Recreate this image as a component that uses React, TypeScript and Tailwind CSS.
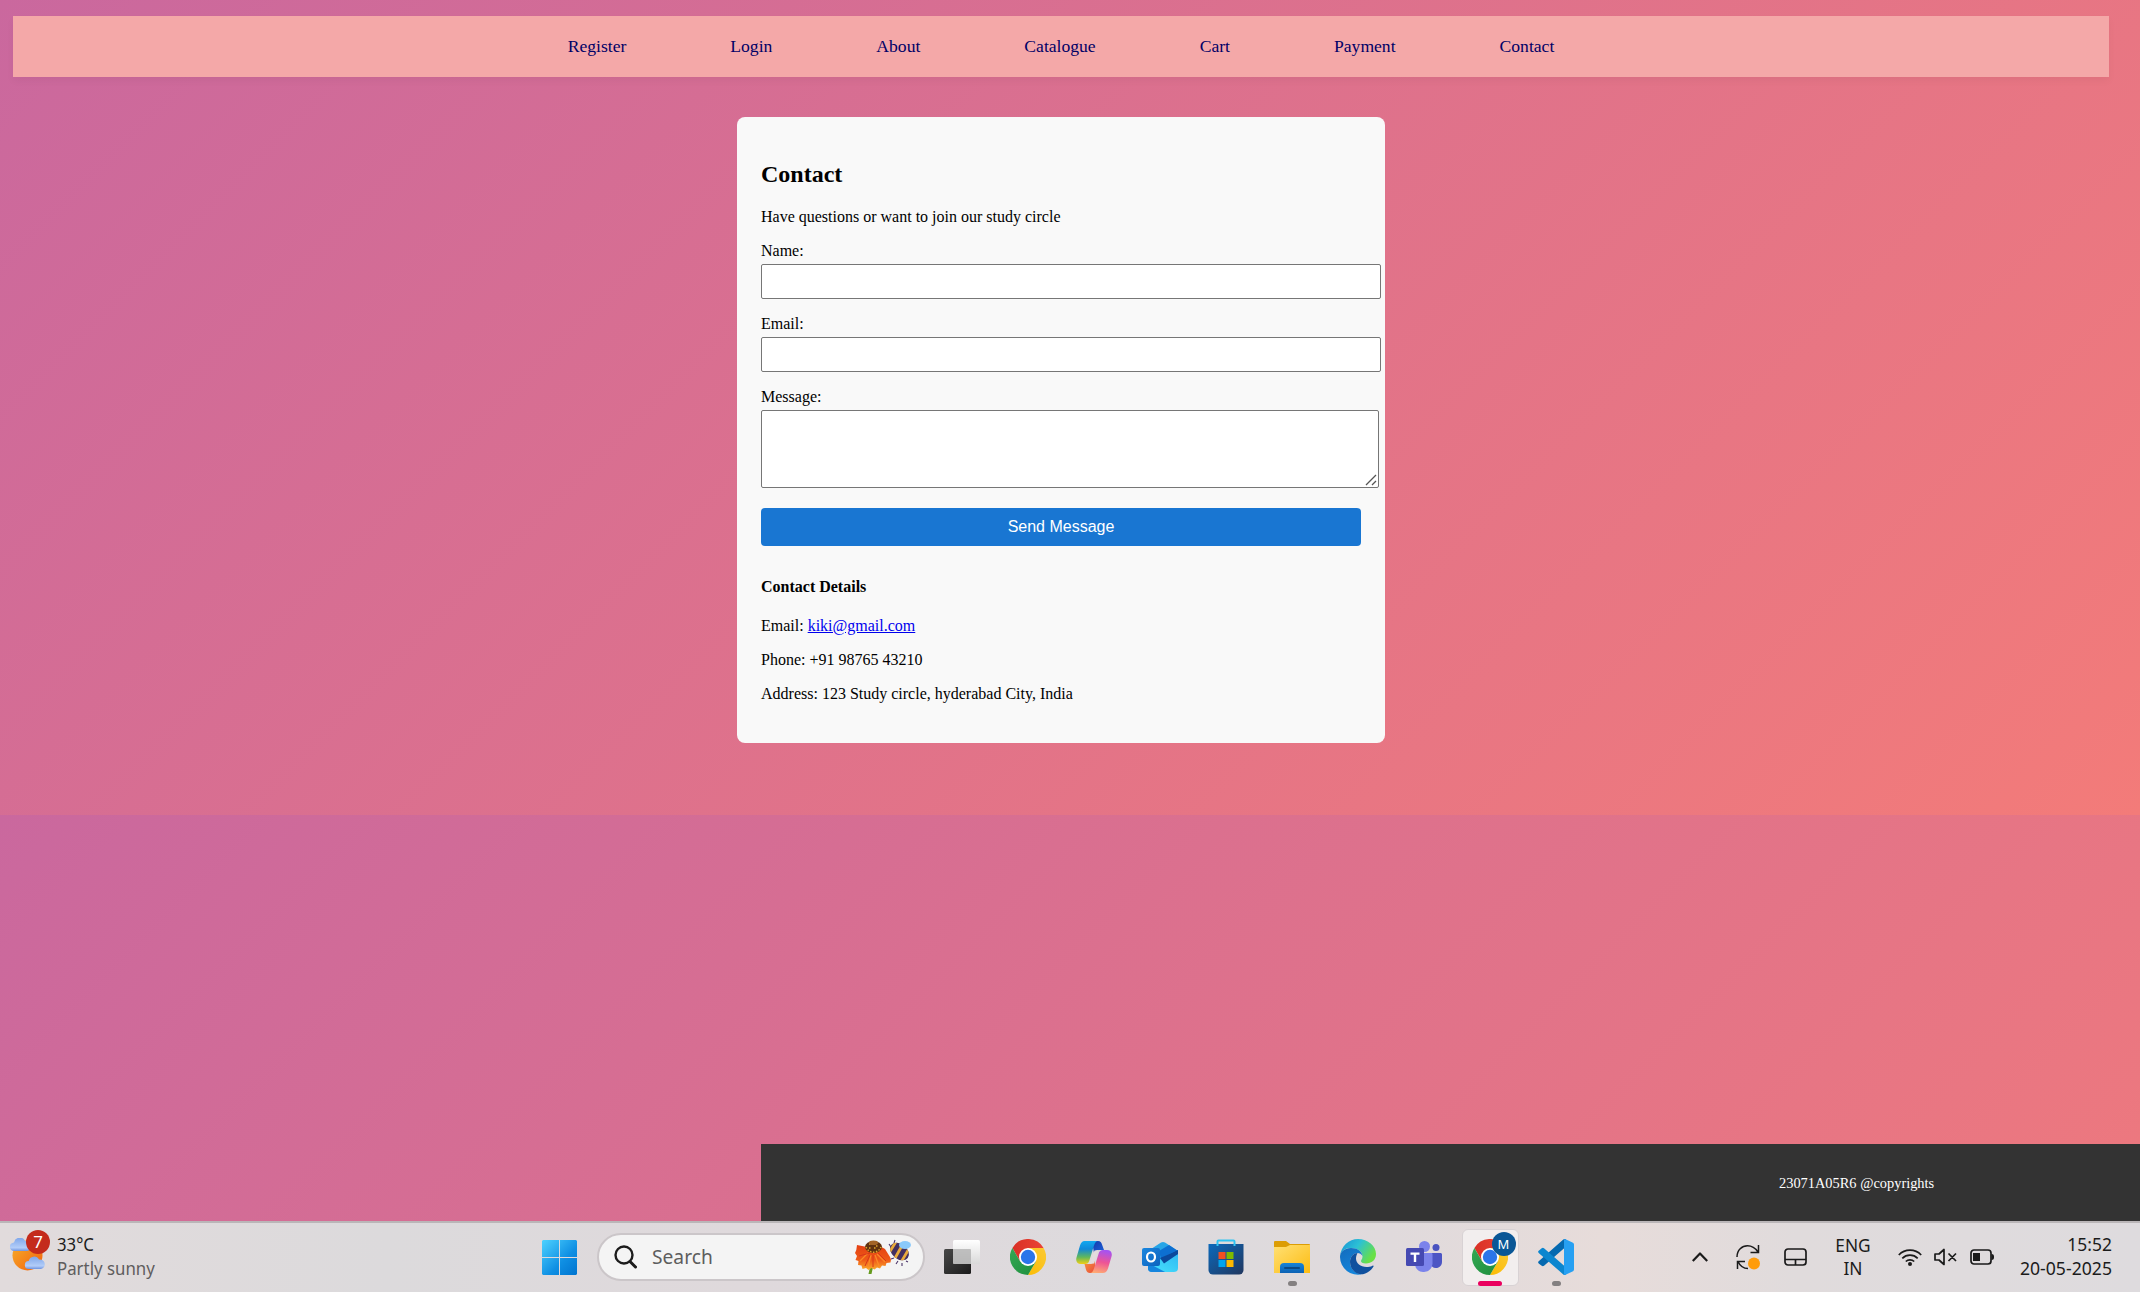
import React from "react";

const nav = ["Register", "Login", "About", "Catalogue", "Cart", "Payment", "Contact"];

function Chrome({ id }: { id: string }) {
  return (
    <svg width="36" height="36" viewBox="0 0 48 48">
      <defs>
        <linearGradient id={id + "r"} x1="0" y1="0" x2="1" y2="0">
          <stop offset="0" stopColor="#d93025" />
          <stop offset="1" stopColor="#ea4335" />
        </linearGradient>
        <linearGradient id={id + "g"} x1="0" y1="0" x2="1" y2="1">
          <stop offset="0" stopColor="#34a853" />
          <stop offset="1" stopColor="#1e8e3e" />
        </linearGradient>
        <linearGradient id={id + "y"} x1="1" y1="0" x2="0" y2="1">
          <stop offset="0" stopColor="#fbc934" />
          <stop offset="1" stopColor="#fbbc04" />
        </linearGradient>
      </defs>
      <path d="M24 12h20.8A24 24 0 0 0 3.2 12l10.4 18z" fill={`url(#${id}r)`} />
      <path d="M34.4 30 24 48A24 24 0 0 0 44.8 12H24z" fill={`url(#${id}y)`} />
      <path d="M13.6 30 3.2 12A24 24 0 0 0 24 48l10.4-18z" fill={`url(#${id}g)`} />
      <circle cx="24" cy="24" r="12" fill="#fff" />
      <circle cx="24" cy="24" r="9.6" fill="#2b75ea" />
    </svg>
  );
}

function Weather() {
  const cloud = "M4 13a4 4 0 0 1-.3-8A5.5 5.5 0 0 1 14 3.6 4.700 4.700 0 0 1 16 13z";
  return (
    <svg width="38" height="38" viewBox="0 0 38 38">
      <defs>
        <linearGradient id="sun" x1="0" y1="0" x2="1" y2="1">
          <stop offset="0" stopColor="#f7b02c" />
          <stop offset="1" stopColor="#f2600c" />
        </linearGradient>
        <linearGradient id="cld" x1="0" y1="0" x2="0" y2="1">
          <stop offset="0" stopColor="#7ea6ea" />
          <stop offset=".75" stopColor="#b3cdf8" />
          <stop offset="1" stopColor="#6d93e0" />
        </linearGradient>
      </defs>
      <circle cx="17.500" cy="17.500" r="15" fill="url(#sun)" />
      <path d={cloud} fill="url(#cld)" transform="translate(0 -1) scale(1.080)" />
      <path d={cloud} fill="url(#cld)" transform="translate(15 18)" />
    </svg>
  );
}

function Blossom() {
  return (
    <svg width="58" height="36" viewBox="0 0 58 36">
      <defs>
        <linearGradient id="petal" x1="0" y1="0" x2="0" y2="1">
          <stop offset="0" stopColor="#e43f12" />
          <stop offset=".6" stopColor="#ee5a18" />
          <stop offset="1" stopColor="#fbab2c" />
        </linearGradient>
        <clipPath id="beeBody">
          <ellipse cx="44.500" cy="12.500" rx="10.500" ry="7.500" transform="rotate(38 44.500 12.500)" />
        </clipPath>
      </defs>
      <path d="M15 28h3l-1.500 7h-3z" fill="#659b1e" />
      <path
        d="M12 8 2 6l-.7 5L0 14l2 3-1.500 4 3 1-.5 4 3.500.5 1 3.500 3.500-1 2.500 2 3-2 3 1.500 2.500-2 3 1 2-3 3.500.5 1-3 4-.5.500-3L35 18l-5-8-7-4z"
        fill="url(#petal)"
      />
      <path d="M13 14 5 22M16 16l-3 12M20 16l4 11M22 15l8 8" stroke="#fb8a26" strokeWidth="1.300" />
      <path d="M15 14 4 17M15 16l-5 11M18 16v12M23 14l8 8" stroke="#d8371a" />
      <ellipse cx="18.500" cy="8" rx="8.500" ry="6" fill="#60310f" />
      <path d="M11 8c3 7 12 7 15 0M14 5h2m2-2h2m1 4h2M14 9h2m3 0h2" stroke="#e2a62a" strokeWidth="1.500" strokeDasharray="1.500 1.500" fill="none" />
      <ellipse cx="18.500" cy="3.800" rx="4.500" ry="2.300" fill="#a36326" />
      <path d="m39 4 1-3m-4 7-2-3m5 14-3 1m7 2-2 3m6-1v3m4-5 2 1" stroke="#4a3369" strokeWidth="1.100" fill="none" />
      <g clipPath="url(#beeBody)">
        <path fill="#443060" d="M32 0h26v28H32z" />
        <path d="M42 1 34 14M49 3 39 21M55 8 45 25" stroke="#e9aa3b" strokeWidth="2.800" />
      </g>
      <ellipse cx="50" cy="6" rx="6" ry="4" fill="#8ac9fa" />
    </svg>
  );
}

function TaskView() {
  return (
    <svg width="36" height="36" viewBox="0 0 36 36">
      <defs>
        <linearGradient id="tv" x1="0" y1="0" x2="1" y2="1">
          <stop offset="0" stopColor="#484848" />
          <stop offset="1" stopColor="#1b1b1b" />
        </linearGradient>
        <linearGradient id="tw" x1="0" y1="0" x2="0" y2="1">
          <stop offset="0" stopColor="#fff" />
          <stop offset="1" stopColor="#d9d9d9" />
        </linearGradient>
      </defs>
      <rect x="0" y="10" width="27" height="25" rx="1.500" fill="url(#tv)" />
      <rect x="9" y="1" width="27" height="24" rx="1.500" fill="url(#tw)" />
      <path d="M9 10h17a1 1 0 0 1 1 1v14H10a1 1 0 0 1-1-1z" fill="#aaa" opacity=".7" />
    </svg>
  );
}

function Copilot() {
  return (
    <svg width="36" height="34" viewBox="0 0 36 34">
      <defs>
        <linearGradient id="cpa" x1="0" y1="0" x2="0" y2="1">
          <stop offset="0" stopColor="#13a8f0" />
          <stop offset=".35" stopColor="#1288d8" />
          <stop offset=".7" stopColor="#5fb85c" />
          <stop offset="1" stopColor="#f2cf12" />
        </linearGradient>
        <linearGradient id="cpb" x1="0.500" y1="0" x2=".3" y2="1">
          <stop offset="0" stopColor="#a653f0" />
          <stop offset=".5" stopColor="#ee5495" />
          <stop offset="1" stopColor="#ffab73" />
        </linearGradient>
        <linearGradient id="cpc" x1="0" y1="0" x2="1" y2="1">
          <stop offset="0" stopColor="#1437a8" />
          <stop offset="1" stopColor="#1e63dc" />
        </linearGradient>
        <linearGradient id="cpd" x1="0" y1="0" x2="1" y2="1">
          <stop offset="0" stopColor="#f8973c" />
          <stop offset="1" stopColor="#e8483b" />
        </linearGradient>
      </defs>
      <path d="M16 1h6c2.500 0 3.300 1.300 4 3.500L28 10h-5c-2.500 0-4 1-5 3z" fill="url(#cpc)" />
      <path d="M20 33h-6c-2.500 0-3.500-1.500-4.200-4L8.500 24H13c3 0 4.500-1.500 5.500-4z" fill="url(#cpd)" />
      <path d="M8.500 1H22c-2 0-3 1.500-4 4.500L13.500 20c-.9 3-2 4-4.500 4H5c-4 0-5.500-3-4.500-6.500L4 5.500C5 2.500 6.300 1 8.500 1z" fill="url(#cpa)" />
      <path d="M27 33H14c2 0 3-1.500 4-4.500L22.500 14c.9-3 2-4 4.500-4h4c4 0 5.500 3 4.500 6.500L32 28.500C31 31.500 29.500 33 27 33z" fill="url(#cpb)" />
      <path d="m18.500 10.500 4-.5-4.500 13.500-4.500.5z" fill="#e4dcdd" />
    </svg>
  );
}

function Outlook() {
  return (
    <svg width="36" height="32" viewBox="0 0 36 32">
      <defs>
        <linearGradient id="ol" x1="0" y1="0" x2="1" y2="1">
          <stop offset="0" stopColor="#1a87e0" />
          <stop offset="1" stopColor="#0d62bd" />
        </linearGradient>
        <linearGradient id="oe" x1="1" y1="0" x2="0" y2="1">
          <stop offset="0" stopColor="#2fb9f3" />
          <stop offset=".7" stopColor="#41d7fa" />
          <stop offset="1" stopColor="#1681dd" />
        </linearGradient>
      </defs>
      <path d="M6 10 19 1.500a4 4 0 0 1 4 0L36 10v10H6z" fill="#27a5e7" />
      <path d="m17 10 10-6 9 6-16 12z" fill="#0d6fd1" />
      <path d="m18 19 18-10v6L20 24z" fill="#0b489c" />
      <path d="M6 22 36 13v14a4 4 0 0 1-4 4H10a4 4 0 0 1-4-4z" fill="url(#oe)" />
      <path d="m18 17 18-7.500V13l-14 9.500z" fill="#0b489c" />
      <path d="M6 22 23 31H10a4 4 0 0 1-4-4z" fill="#1585de" />
      <rect y="7" width="18" height="18" rx="2" fill="url(#ol)" />
      <ellipse cx="9" cy="16" rx="4" ry="4.500" fill="none" stroke="#fff" strokeWidth="2.200" />
    </svg>
  );
}

function Store() {
  return (
    <svg width="36" height="36" viewBox="0 0 36 36">
      <defs>
        <linearGradient id="st" x1="0" y1="0" x2="1" y2="1">
          <stop offset="0" stopColor="#0c69bb" />
          <stop offset="1" stopColor="#21375f" />
        </linearGradient>
      </defs>
      <path d="M.5 5h35v26a4.500 4.500 0 0 1-4.500 4.500H5A4.500 4.500 0 0 1 .5 31z" fill="url(#st)" />
      <path d="M9.500 7V2.500a1 1 0 0 1 1-1h15a1 1 0 0 1 1 1V7" stroke="#30c3f2" strokeWidth="2" fill="none" />
      <path d="M10.500 13h7v7h-7z" fill="#f25022" />
      <path d="M18.500 13h7v7h-7z" fill="#7fba00" />
      <path d="M10.500 21h7v7h-7z" fill="#00a4ef" />
      <path d="M18.500 21h7v7h-7z" fill="#ffb900" />
    </svg>
  );
}

function Explorer() {
  return (
    <svg width="36" height="34" viewBox="0 0 36 34">
      <defs>
        <linearGradient id="fo" x1="0" y1="0" x2="1" y2="1">
          <stop offset="0" stopColor="#ffe074" />
          <stop offset="1" stopColor="#fdbc12" />
        </linearGradient>
        <linearGradient id="fb" x1="0" y1="0" x2="0" y2="1">
          <stop offset="0" stopColor="#1784d8" />
          <stop offset="1" stopColor="#0c62b4" />
        </linearGradient>
      </defs>
      <path d="M0 2a1 1 0 0 1 1-1h11l4 3h19a1 1 0 0 1 1 1v8H0z" fill="#dc9d04" />
      <path d="M0 7h12l4-2h20v28H0z" fill="url(#fo)" />
      <path d="M6 33v-6a4 4 0 0 1 4-4h16a4 4 0 0 1 4 4v6z" fill="url(#fb)" />
      <path d="M11 28h14" stroke="#0b4a86" strokeWidth="2" strokeLinecap="round" />
    </svg>
  );
}

function Edge() {
  return (
    <svg width="36" height="36" viewBox="0 0 36 36">
      <defs>
        <linearGradient id="ea" x1="0" y1="0" x2="1" y2=".5">
          <stop offset="0" stopColor="#178fd6" />
          <stop offset=".5" stopColor="#2cc1d5" />
          <stop offset="1" stopColor="#69e045" />
        </linearGradient>
        <linearGradient id="eb" x1="0" y1="0" x2=".5" y2="1">
          <stop offset="0" stopColor="#126cbd" />
          <stop offset="1" stopColor="#1485db" />
        </linearGradient>
      </defs>
      <path d="M0 17C1 7 9 0 18 0c10 0 18 7 18 15 0 6-4.500 9.500-10 9.500-3.500 0-5-1.200-5-2.500s1.500-1.700 1.500-4.500C22.500 12 17 9 11 9 5 9 1 12.500 0 17z" fill="url(#ea)" />
      <path d="M0 18C0 12.500 5 9 11 9c6.500 0 11 3.500 11.500 8-1-2-3-3-5-3-4 0-7.500 4-7.500 9 0 7 5 11.500 12 12.300A18 18 0 0 1 0 18z" fill="url(#eb)" />
      <path d="M17.500 14C13 14 10 18.500 10 23c0 7.500 6 13 13 12.300C28 34 31.500 31 33.500 27.500c.4-.8-.2-1.200-1-.8-2 1-4 1.300-6 1.300-6 0-10.500-4-10.500-8.500 0-2.500 1-4.500 1.500-5.500z" fill="#10509e" />
    </svg>
  );
}

function Teams() {
  return (
    <svg width="36" height="34" viewBox="0 0 36 34">
      <circle cx="30" cy="7.500" r="3.500" fill="#4a53c0" />
      <circle cx="18.500" cy="6.500" r="5.500" fill="#7b83eb" />
      <path d="M24 13h10.500c.8 0 1.500.7 1.500 1.500V22a6 6 0 0 1-10 4.500z" fill="#4c55c4" />
      <path d="M10 13h15.500c.8 0 1 .7 1 1.500V24a9 9 0 0 1-17 3z" fill="#7b83eb" />
      <rect y="8" width="18" height="18" rx="1.500" fill="#4549b2" />
      <path d="M4.500 12.500h9v2.200h-3.300V22H7.800v-7.300H4.500z" fill="#fff" />
    </svg>
  );
}

function Code() {
  return (
    <svg width="36" height="36" viewBox="0 0 36 36">
      <path d="M27 8.500 6 26.800a1.800 1.800 0 0 1-2.300 0L.7 24.400a1.500 1.500 0 0 1 0-2.200L25.300.6C26.300-.3 28 0 28 1z" fill="#0569b0" />
      <path d="M27 27.500 6 9.300a1.800 1.800 0 0 0-2.300 0L.7 11.700a1.500 1.500 0 0 0 0 2.200l24.600 21.500c1 .9 2.700.6 2.700-.4z" fill="#0c86cf" />
      <path d="M26 35.600V.4L27 0l7.500 3.400A2.500 2.500 0 0 1 36 5.600v24.800a2.500 2.500 0 0 1-1.500 2.200L27 36z" fill="#27a0f2" />
    </svg>
  );
}

function Slot({ children, dot }: { children: React.ReactNode; dot?: boolean }) {
  return (
    <div className="relative flex h-[66px] w-[66px] items-center justify-center">
      {children}
      {dot && <span className="absolute bottom-[4px] h-[5px] w-[9px] rounded-full bg-[#848081]" />}
    </div>
  );
}

function Tray() {
  const s = { fill: "none", stroke: "#1a1a1a", strokeWidth: 1.7, strokeLinejoin: "round" as const };
  return (
    <div className="flex h-[68px] items-center text-[18px] leading-6 text-[#1b1b1b]">
      <svg width="16" height="10" viewBox="0 0 16 10" {...s} strokeWidth={2.2} className="mr-[28px]">
        <path d="m.8 9 7.200-7.500L15.200 9" />
      </svg>
      <svg width="24" height="26" viewBox="0 0 24 26" className="mr-[24px]" fill="none" stroke="#1a1a1a" strokeWidth="1.500">
        <path d="M1 13C1 6 6 1.800 11.500 1.800c4 0 8 2.500 10.500 6.200M22.500 1v7.500h-8M12 24.500c-4.500 0-8-2.500-10-7M1.500 25v-7.500h7.500" />
        <circle cx="18" cy="19.500" r="6" fill="#ff9c0a" stroke="none" />
      </svg>
      <svg width="23" height="18" viewBox="0 0 23 18" {...s} className="mr-[29px]">
        <rect x="1" y="1" width="21" height="16" rx="3" />
        <path d="M1 11.500h21M11.500 11.500V17" />
      </svg>
      <div className="mr-[28px] w-[34px] pb-[1px] text-center leading-[23px]">
        <div className="-mx-2 scale-x-[.96]">ENG</div>
        <div className="scale-x-[.96]">IN</div>
      </div>
      <svg width="24" height="20" viewBox="0 0 24 20" {...s} className="mr-[12px]">
        <path d="M.8 8a15.500 15.500 0 0 1 22.400 0M4.300 11.300a10.800 10.800 0 0 1 15.400 0M7.800 14.500a6 6 0 0 1 8.400 0" />
        <circle cx="12" cy="17" r="2" fill="#1a1a1a" stroke="none" />
      </svg>
      <svg width="24" height="18" viewBox="0 0 24 18" {...s} className="mr-[12px]">
        <path d="M1 6h4l5-4.500v15L5 12H1zM14.500 5.500l7.500 7.500M22 5.500 14.500 13" />
      </svg>
      <svg width="25" height="16" viewBox="0 0 25 16" {...s}>
        <rect x="1" y="1" width="20" height="14" rx="3" />
        <path d="M3 4h7v8H3z" fill="#1a1a1a" stroke="none" />
        <path d="M21.500 5c2 0 2.500 1 2.500 3s-.5 3-2.500 3z" fill="#1a1a1a" stroke="none" />
      </svg>
      <div className="w-[117px] pb-[3px] text-right">
        <div className="origin-right scale-x-[.97]">15:52</div>
        <div className="origin-right scale-x-[.98] whitespace-nowrap">20-05-2025</div>
      </div>
    </div>
  );
}

export default function App() {
  return (
    <div className="flex h-[1292px] w-[2140px] flex-col overflow-hidden bg-[linear-gradient(135deg,#ca689e,#f37b79)] bg-[length:2140px_815px] bg-repeat-y font-['Liberation_Serif',serif] text-base leading-[18px] text-black">
      <nav className="ml-[13px] mt-4 flex h-[61px] w-[2096px] shrink-0 items-center justify-center gap-[104px] bg-[#f4a8a8] pb-[2px] text-[17.600px] text-[#000066] shadow-[0_4px_8px_rgba(0,0,0,0.04)]">
        {nav.map((n) => (
          <a key={n}>{n}</a>
        ))}
      </nav>

      <main className="ml-[737px] mt-10 flex h-[626px] w-[648px] shrink-0 flex-col rounded-lg bg-[#f9f9f9] px-6 pt-11">
        <h2 className="text-2xl font-bold leading-[27px]">Contact</h2>
        <p className="mt-5">Have questions or want to join our study circle</p>
        <label className="mt-4">Name:</label>
        <input className="mt-1 h-[35px] w-[620px] shrink-0 rounded-[2px] border border-[#767676] bg-white" />
        <label className="mt-4">Email:</label>
        <input className="mt-1 h-[35px] w-[620px] shrink-0 rounded-[2px] border border-[#767676] bg-white" />
        <label className="mt-4">Message:</label>
        <div className="relative mt-1 h-[78px] w-[618px] shrink-0">
          <textarea className="block h-full w-full resize-none rounded-[2px] border border-[#767676] bg-white" />
          <svg className="absolute bottom-[2px] right-[2px]" width="12" height="12" viewBox="0 0 12 12" stroke="#555" strokeWidth="1.300">
            <path d="M1 11 11 1M7 11l4-4" />
          </svg>
        </div>
        <button className="mt-5 h-[38px] w-[600px] shrink-0 rounded bg-[#1976d2] font-['Liberation_Sans',sans-serif] text-white">
          Send Message
        </button>
        <h3 className="mt-8 font-bold">Contact Details</h3>
        <p className="mt-[21px]">
          Email: <a className="text-[#0000ee] underline">kiki@gmail.com</a>
        </p>
        <p className="mt-4">Phone: +91 98765 43210</p>
        <p className="mt-4">Address: 123 Study circle, hyderabad City, India</p>
      </main>

      <footer className="ml-[761px] mt-[401px] flex h-[77px] shrink-0 items-center bg-[#333] pl-[1018px] text-[14.400px] text-white">
        23071A05R6 @copyrights
      </footer>

      <div className="flex h-[71px] shrink-0 items-center border-t-2 border-[#bab6b8] bg-[linear-gradient(90deg,#e1dbdc_0%,#dcdadc_18%,#dfd9dc_35%,#dddadd_55%,#e0dadc_65%,#e7dcda_75%,#e0dbdc_84%,#dedbde_100%)] pb-px font-['Noto_Sans',sans-serif]">
        <div className="flex w-[542px] items-center pl-[10px]">
          <div className="relative mr-[9px]">
            <Weather />
            <span className="absolute left-[16px] top-[-8px] flex size-6 items-center justify-center rounded-full bg-[#c42b1c] text-[17px] text-white">
              7
            </span>
          </div>
          <div className="pb-[3px] text-[18px] leading-6">
            <div className="origin-left scale-x-[.93] text-[#1b1b1b]">33°C</div>
            <div className="origin-left scale-x-[.935] text-[#5f5d5e]">Partly sunny</div>
          </div>
        </div>
        <svg width="35" height="35" viewBox="0 0 35 35" className="mr-5">
          <defs>
            <linearGradient id="win" gradientUnits="userSpaceOnUse" x1="0" y1="0" x2="35" y2="35">
              <stop offset="0" stopColor="#4dd2ff" />
              <stop offset=".6" stopColor="#0f8fe3" />
              <stop offset="1" stopColor="#0074cf" />
            </linearGradient>
          </defs>
          <path d="M1 0h16v17H0V1zM18 0h16l1 1v16H18zM0 18h17v17H1l-1-1zM18 18h17v16l-1 1H18z" fill="url(#win)" />
        </svg>
        <div className="flex h-[48px] w-[328px] items-center rounded-full border-2 border-[#cbc6c9] bg-[#f4f4f4] pl-[15px] pr-[10px]">
          <svg width="23" height="24" viewBox="0 0 23 24" fill="none" stroke="#1c1c1c" strokeWidth="2.400" strokeLinecap="round">
            <circle cx="10" cy="10" r="8.500" />
            <path d="m16 16.500 5.500 5.500" strokeWidth="3" />
          </svg>
          <span className="ml-[15px] flex-1 origin-left scale-x-[.96] text-[20px] leading-7 text-[#5d5d5d]">Search</span>
          <Blossom />
        </div>
        <div className="ml-1 flex">
          <Slot><TaskView /></Slot>
          <Slot><Chrome id="a" /></Slot>
          <Slot><Copilot /></Slot>
          <Slot><Outlook /></Slot>
          <Slot><Store /></Slot>
          <Slot dot><Explorer /></Slot>
          <Slot><Edge /></Slot>
          <Slot><Teams /></Slot>
          <Slot>
            <div className="relative flex size-[57px] items-center justify-center rounded-md border border-[#d8d2d4] bg-[#f2eeee]">
              <Chrome id="b" />
              <span className="absolute right-[2px] top-[2px] flex size-6 items-center justify-center rounded-full bg-[#0a5796] text-[13px] text-white">
                M
              </span>
              <span className="absolute bottom-[-1px] h-[5px] w-6 rounded-full bg-[#ea005e]" />
            </div>
          </Slot>
          <Slot dot><Code /></Slot>
        </div>
        <div className="ml-[103px]">
          <Tray />
        </div>
      </div>
    </div>
  );
}
